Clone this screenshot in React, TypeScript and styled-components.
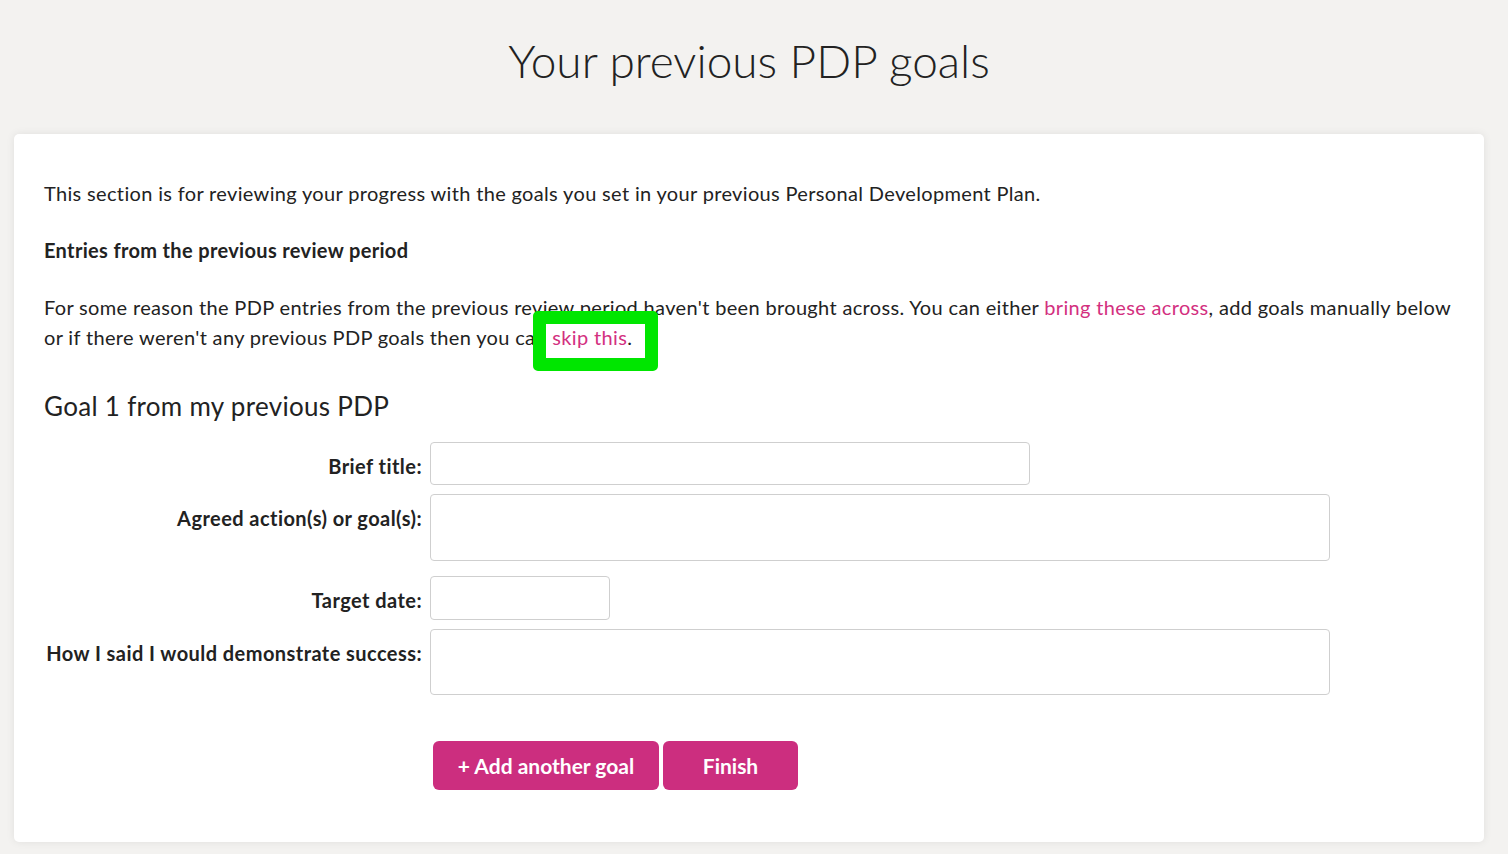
import React from "react";
import styled, { createGlobalStyle } from "styled-components";

const Global = createGlobalStyle`
  html, body { margin: 0; padding: 0; background: #f3f2f0; }
  body { font-family: Lato, "Open Sans", sans-serif; color: #222; }
  * { box-sizing: border-box; }
`;

const Page = styled.div`
  padding: 0 24px 12px 14px;
  min-height: 854px;
`;

const Title = styled.h1`
  margin: 0;
  padding: 33px 0 45px;
  text-align: center;
  font-weight: 300;
  font-size: 46px;
  line-height: 56px;
  color: #222;
`;

const Card = styled.div`
  background: #fff;
  border-radius: 5px;
  box-shadow: 0 0 8px rgba(0, 0, 0, 0.08);
  padding: 44px 30px 52px;
`;

const Para = styled.p<{ $bold?: boolean }>`
  margin: 0 0 27px;
  font-size: 20px;
  line-height: 30px;
  letter-spacing: 0.34px;
  font-weight: ${(p) => (p.$bold ? 700 : 400)};
`;

const Link = styled.a`
  color: #d3307f;
  text-decoration: none;
`;

const Highlighted = styled.span`
  position: relative;
  z-index: 0;
  &::before {
    content: "";
    position: absolute;
    left: -19px;
    right: -26px;
    top: -14px;
    bottom: -22px;
    border: 13px solid #00e600;
    border-radius: 5px;
    background: #fff;
    z-index: -1;
  }
`;

const GoalHeading = styled.h2`
  margin: 37px 0 19px;
  font-size: 26px;
  line-height: 34px;
  letter-spacing: 0.3px;
  font-weight: 400;
`;

const Form = styled.div`
  display: grid;
  grid-template-columns: 378px 1fr;
  column-gap: 8px;
`;

const Label = styled.label<{ $top?: number }>`
  text-align: right;
  font-weight: 700;
  font-size: 20px;
  line-height: 30px;
  letter-spacing: 0.44px;
  padding-top: ${(p) => p.$top ?? 9}px;
  margin-bottom: 9px;
`;

const Field = styled.div<{ $w: number; $h: number; $mt?: number }>`
  width: ${(p) => p.$w}px;
  height: ${(p) => p.$h}px;
  border: 1px solid #cfcfcf;
  border-radius: 4px;
  background: #fff;
  margin-bottom: 9px;
  margin-top: ${(p) => p.$mt ?? 0}px;
`;

const Actions = styled.div`
  display: flex;
  gap: 4px;
  margin: 37px 0 0 389px;
`;

const Button = styled.button<{ $w: number }>`
  width: ${(p) => p.$w}px;
  height: 49px;
  border: none;
  border-radius: 6px;
  background: #cc2e7f;
  color: #fff;
  font-family: Lato, sans-serif;
  font-weight: 700;
  font-size: 21px;
  cursor: pointer;
`;

export default function App() {
  return (
    <>
      <Global />
      <Page>
        <Title>Your previous PDP goals</Title>
        <Card>
          <Para>
            This section is for reviewing your progress with the goals you set in your previous Personal Development Plan.
          </Para>
          <Para $bold>Entries from the previous review period</Para>
          <Para>
            For some reason the PDP entries from the previous review period haven't been brought across. You can either{" "}
            <Link href="#">bring these across</Link>, add goals manually below or if there weren't any previous PDP goals then you can{" "}
            <Highlighted>
              <Link href="#">skip this</Link>.
            </Highlighted>
          </Para>
          <GoalHeading>Goal 1 from my previous PDP</GoalHeading>
          <Form>
            <Label $top={9}>Brief title:</Label>
            <Field $w={600} $h={43} />
            <Label $top={9}>Agreed action(s) or goal(s):</Label>
            <Field $w={900} $h={67} />
            <Label $top={15}>Target date:</Label>
            <Field $w={180} $h={44} $mt={6} />
            <Label $top={9}>How I said I would demonstrate success:</Label>
            <Field $w={900} $h={66} />
          </Form>
          <Actions>
            <Button $w={226}>+ Add another goal</Button>
            <Button $w={135}>Finish</Button>
          </Actions>
        </Card>
      </Page>
    </>
  );
}
